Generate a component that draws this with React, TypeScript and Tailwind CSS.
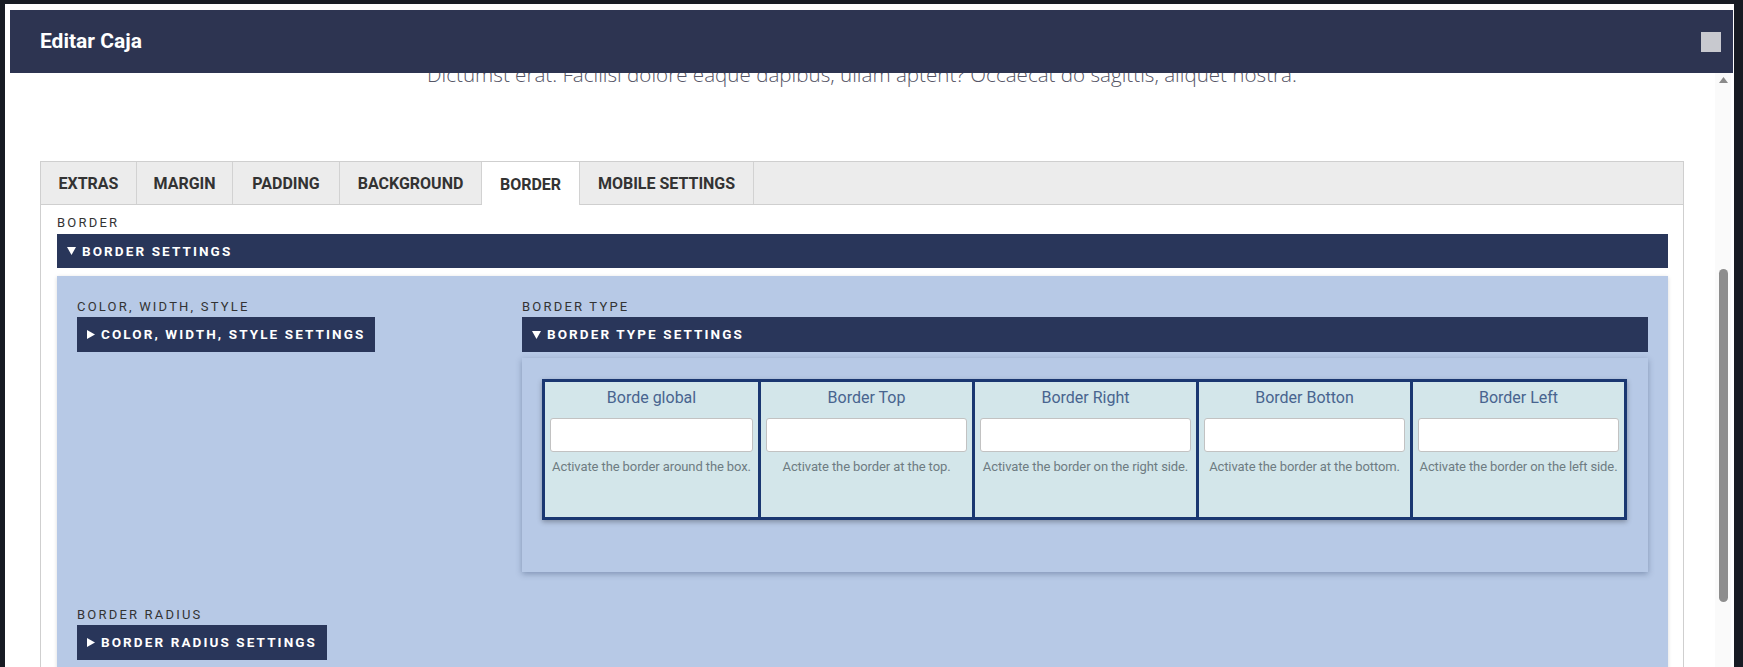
const tabs = [
  { label: 'EXTRAS', w: 'w-[96px]' },
  { label: 'MARGIN', w: 'w-[96px]' },
  { label: 'PADDING', w: 'w-[107px]' },
  { label: 'BACKGROUND', w: 'w-[142px]' },
  { label: 'BORDER', w: 'w-[98px]', active: true },
  { label: 'MOBILE SETTINGS', w: 'w-[174px]' },
];

const cells = [
  { title: 'Borde global', desc: 'Activate the border around the box.', w: 'w-[213px]' },
  { title: 'Border Top', desc: 'Activate the border at the top.', w: 'w-[214px]' },
  { title: 'Border Right', desc: 'Activate the border on the right side.', w: 'w-[224px]' },
  { title: 'Border Botton', desc: 'Activate the border at the bottom.', w: 'w-[214px]' },
  { title: 'Border Left', desc: 'Activate the border on the left side.', w: 'w-[214px]' },
];

function Caret({ open }: { open?: boolean }) {
  return open ? (
    <svg className="mr-[6px] shrink-0" width="9" height="8" viewBox="0 0 9 8">
      <path d="M0 0H9L4.5 8z" fill="#fff" />
    </svg>
  ) : (
    <svg className="mr-[6px] shrink-0" width="8" height="9" viewBox="0 0 8 9">
      <path d="M0 0L8 4.5L0 9z" fill="#fff" />
    </svg>
  );
}

function Label({ children }: { children: React.ReactNode }) {
  return <div className="text-[13px] leading-4 tracking-[2.2px] text-[#333]">{children}</div>;
}

function Toggle({ open, children, full }: { open?: boolean; children: React.ReactNode; full?: boolean }) {
  return (
    <div
      className={`${full ? 'flex' : 'inline-flex'} h-[35px] items-center bg-[#29365a] px-[10px] text-[13.5px] font-bold tracking-[2.1px] text-white`}
    >
      <Caret open={open} />
      {children}
    </div>
  );
}

export default function App() {
  return (
    <div className="h-[667px] w-full overflow-hidden bg-[#171b23] pl-[5px] pr-[9px] pt-[4px] font-['Roboto',sans-serif]">
      <div className="flex h-[663px] flex-col bg-white pt-[6px] pr-[3px]">
        <div className="relative z-10 mx-[5px] -mr-[2px] flex h-[63px] shrink-0 items-center justify-between bg-[#2d3451] pl-[30px] pr-[12px]">
          <h1 className="text-[21px] font-bold text-white">Editar Caja</h1>
          <div className="h-[20px] w-[20px] bg-[#c8c9cf]" />
        </div>

        <div className="flex min-h-0 flex-1">
          <div className="min-w-0 flex-1 overflow-hidden pl-[35px] pr-[31px]">
            <p className="-mt-[13px] text-center font-['Open_Sans',sans-serif] text-[20.6px] font-light leading-7 text-[#555566]">
              Dictumst erat. Facilisi dolore eaque dapibus, ullam aptent? Occaecat do sagittis, aliquet nostra.
            </p>

            <div className="mt-[73px] border border-b-0 border-[#cfcfcf]">
              <div className="flex h-[43px] border-b border-[#cfcfcf] bg-[#ececec]">
                {tabs.map((t) => (
                  <div
                    key={t.label}
                    className={`${t.w} flex items-center justify-center border-r border-[#d2d2d2] pt-[2px] text-[16px] font-bold text-[#333] ${
                      t.active ? '-mb-px bg-white' : ''
                    }`}
                  >
                    {t.label}
                  </div>
                ))}
              </div>

              <div className="pl-[16px] pr-[15px] pt-[10px]">
                <div className="mb-[3px]">
                  <Label>BORDER</Label>
                </div>
                <div className="flex h-[34px] items-center bg-[#29365a] px-[10px] text-[13.5px] font-bold tracking-[2.1px] text-white">
                  <Caret open />
                  BORDER SETTINGS
                </div>

                <div className="mt-[8px] bg-[#b7c9e6] px-[20px] pt-[23px] pb-[40px] shadow-[0_1px_4px_rgba(0,0,0,0.15)]">
                  <div className="grid grid-cols-[425px_1fr] gap-x-[20px]">
                    <div>
                      <div className="mb-[2px]">
                        <Label>COLOR, WIDTH, STYLE</Label>
                      </div>
                      <Toggle>COLOR, WIDTH, STYLE SETTINGS</Toggle>
                    </div>
                    <div>
                      <div className="mb-[2px]">
                        <Label>BORDER TYPE</Label>
                      </div>
                      <Toggle open full>
                        BORDER TYPE SETTINGS
                      </Toggle>
                      <div className="mt-[6px] bg-[#b7c9e6] px-[20px] pt-[21px] pb-[52px] shadow-[0_2px_6px_rgba(30,50,90,0.35)]">
                        <div className="flex w-fit border-[3px] border-[#1a3771] shadow-[0_2px_5px_rgba(0,0,0,0.3)]">
                          {cells.map((c, i) => (
                            <div
                              key={c.title}
                              className={`${c.w} h-[135px] bg-[#d3e6ea] px-[5px] pt-[6px] ${i > 0 ? 'border-l-[3px] border-[#1a3771]' : ''}`}
                            >
                              <div className="text-center text-[16px] leading-5 text-[#48648f]">{c.title}</div>
                              <div className="mt-[10px] h-[34px] rounded-[3px] border border-[#c2c2c2] bg-white" />
                              <div className="mt-[7px] whitespace-nowrap text-center text-[13px] leading-4 tracking-[-0.1px] text-[#6e7c82]">
                                {c.desc}
                              </div>
                            </div>
                          ))}
                        </div>
                      </div>
                    </div>
                  </div>

                  <div className="mt-[35px]">
                    <div className="mb-[2px]">
                      <Label>BORDER RADIUS</Label>
                    </div>
                    <Toggle>BORDER RADIUS SETTINGS</Toggle>
                  </div>
                </div>
              </div>
            </div>
          </div>

          <div className="flex w-[16px] shrink-0 flex-col items-center bg-[#fafafa]">
            <svg className="mt-[4px]" width="9" height="6" viewBox="0 0 9 6">
              <path d="M4.5 0L9 6H0z" fill="#8a8a8a" />
            </svg>
            <div className="mt-[186px] h-[333px] w-[9px] rounded-[5px] bg-[#8e8e8e]" />
          </div>
        </div>
      </div>
    </div>
  );
}
